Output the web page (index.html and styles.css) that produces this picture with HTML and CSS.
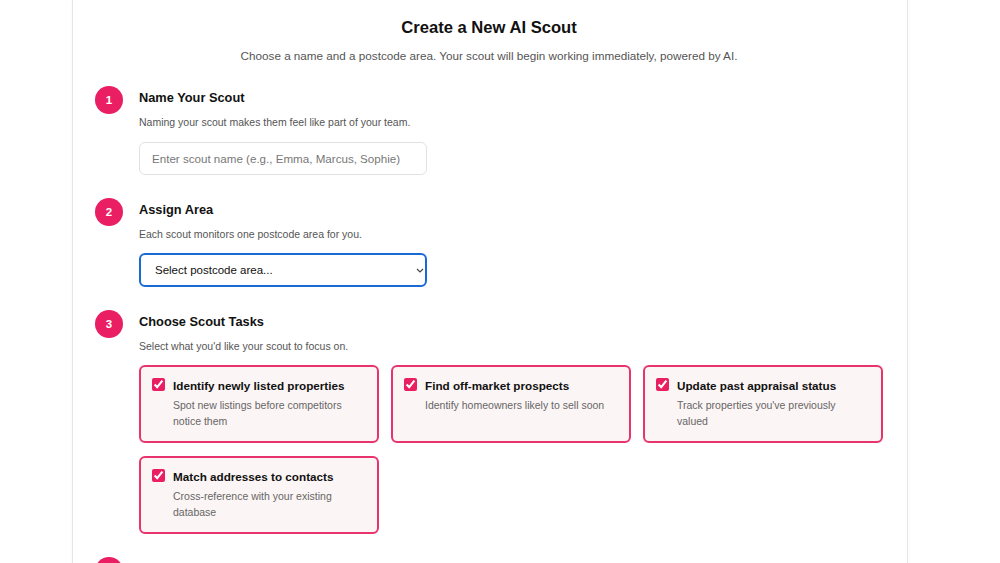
FILE: index.html
```html
<!DOCTYPE html>
<html lang="en">

<head>
  <meta charset="UTF-8">
  <title>Create a New AI Scout</title>
  <link rel="stylesheet" href="styles.css">
</head>

<body>

  <div class="panel">
    <h1 class="page-title">Create a New AI Scout</h1>
    <p class="page-sub">Choose a name and a postcode area. Your scout will begin working immediately, powered by AI.</p>

    <div class="step">
      <div class="step-num">1</div>
      <div class="step-body">
        <h2 class="step-title">Name Your Scout</h2>
        <p class="step-desc">Naming your scout makes them feel like part of your team.</p>
        <input type="text" class="field" placeholder="Enter scout name (e.g., Emma, Marcus, Sophie)">
      </div>
    </div>

    <div class="step">
      <div class="step-num">2</div>
      <div class="step-body">
        <h2 class="step-title">Assign Area</h2>
        <p class="step-desc">Each scout monitors one postcode area for you.</p>
        <div class="select-wrap">
          <select class="field field-select">
            <option>Select postcode area...</option>
          </select>
          <svg class="chevron" width="8" height="5" viewBox="0 0 8 5"><path d="M1 1l3 3 3-3" fill="none" stroke="#444" stroke-width="1.1"/></svg>
        </div>
      </div>
    </div>

    <div class="step">
      <div class="step-num">3</div>
      <div class="step-body">
        <h2 class="step-title">Choose Scout Tasks</h2>
        <p class="step-desc">Select what you'd like your scout to focus on.</p>
        <div class="tasks">
          <label class="task">
            <input type="checkbox" checked>
            <span class="task-text">
              <span class="task-title">Identify newly listed properties</span>
              <span class="task-desc">Spot new listings before competitors notice them</span>
            </span>
          </label>
          <label class="task">
            <input type="checkbox" checked>
            <span class="task-text">
              <span class="task-title">Find off-market prospects</span>
              <span class="task-desc">Identify homeowners likely to sell soon</span>
            </span>
          </label>
          <label class="task">
            <input type="checkbox" checked>
            <span class="task-text">
              <span class="task-title">Update past appraisal status</span>
              <span class="task-desc">Track properties you've previously valued</span>
            </span>
          </label>
          <label class="task">
            <input type="checkbox" checked>
            <span class="task-text">
              <span class="task-title">Match addresses to contacts</span>
              <span class="task-desc">Cross-reference with your existing database</span>
            </span>
          </label>
        </div>
      </div>
    </div>

    <div class="step">
      <div class="step-num">4</div>
    </div>
  </div>

</body>

</html>
```

FILE: styles.css
```css
body {
  margin: 0;
  font-family: "Liberation Sans", Arial, sans-serif;
  background-color: #ffffff;
  color: #111;
}

.panel {
  width: 788px;
  margin: 0 0 0 72px;
  padding: 16px 24px 40px 22px;
  border-left: 1px solid #e6e6e6;
  border-right: 1px solid #e6e6e6;
  box-shadow: 0 0 4px rgba(0, 0, 0, 0.03);
}

.page-title {
  margin: 0;
  text-align: center;
  font-size: 16.6px;
  line-height: 24px;
  font-weight: bold;
}

.page-sub {
  margin: 7px 0 0;
  text-align: center;
  font-size: 11.7px;
  line-height: 18px;
  color: #555;
}

.step {
  display: flex;
  gap: 16px;
  margin-top: 23px;
}

.page-sub + .step {
  margin-top: 21px;
}

.step-num {
  flex: none;
  width: 28px;
  height: 28px;
  border-radius: 50%;
  background-color: #e91e63;
  color: #fff;
  font-size: 11.5px;
  font-weight: bold;
  display: flex;
  align-items: center;
  justify-content: center;
}

.step-body {
  flex: 1;
}

.step-title {
  margin: 2px 0 0;
  font-size: 12.8px;
  line-height: 20px;
  font-weight: bold;
}

.step-desc {
  margin: 6px 0 0;
  font-size: 10.5px;
  line-height: 16px;
  color: #555;
}

.field {
  display: block;
  margin-top: 12px;
  width: 288px;
  height: 33px;
  padding: 0 12px;
  box-sizing: border-box;
  font-family: inherit;
  font-size: 11.6px;
  border: 1px solid #e2e2e2;
  border-radius: 6px;
  background-color: #fff;
  color: #111;
}

.field::placeholder {
  color: #777;
}

.select-wrap {
  position: relative;
  width: 288px;
}

.field-select {
  height: 34px;
  margin-top: 11px;
  padding: 0 14px;
  font-size: 11.5px;
  border: 2px solid #1a6ad6;
  appearance: none;
  -webkit-appearance: none;
  outline: none;
}

.chevron {
  position: absolute;
  right: 3px;
  top: 15px;
}

.tasks {
  display: grid;
  grid-template-columns: repeat(3, 240px);
  gap: 13px 12px;
  margin-top: 11px;
}

.task {
  display: flex;
  gap: 8px;
  height: 78px;
  padding: 11px 22px 0 11px;
  box-sizing: border-box;
  border: 2px solid #e9336c;
  border-radius: 6px;
  background-color: #fcf5f5;
}

.task input {
  flex: none;
  margin: 0;
  width: 13px;
  height: 13px;
  accent-color: #e91e63;
}

.task-text {
  display: flex;
  flex-direction: column;
}

.task-title {
  font-size: 11.7px;
  line-height: 16px;
  font-weight: bold;
}

.task-desc {
  margin-top: 3px;
  font-size: 10.5px;
  line-height: 16px;
  color: #666;
}
```
